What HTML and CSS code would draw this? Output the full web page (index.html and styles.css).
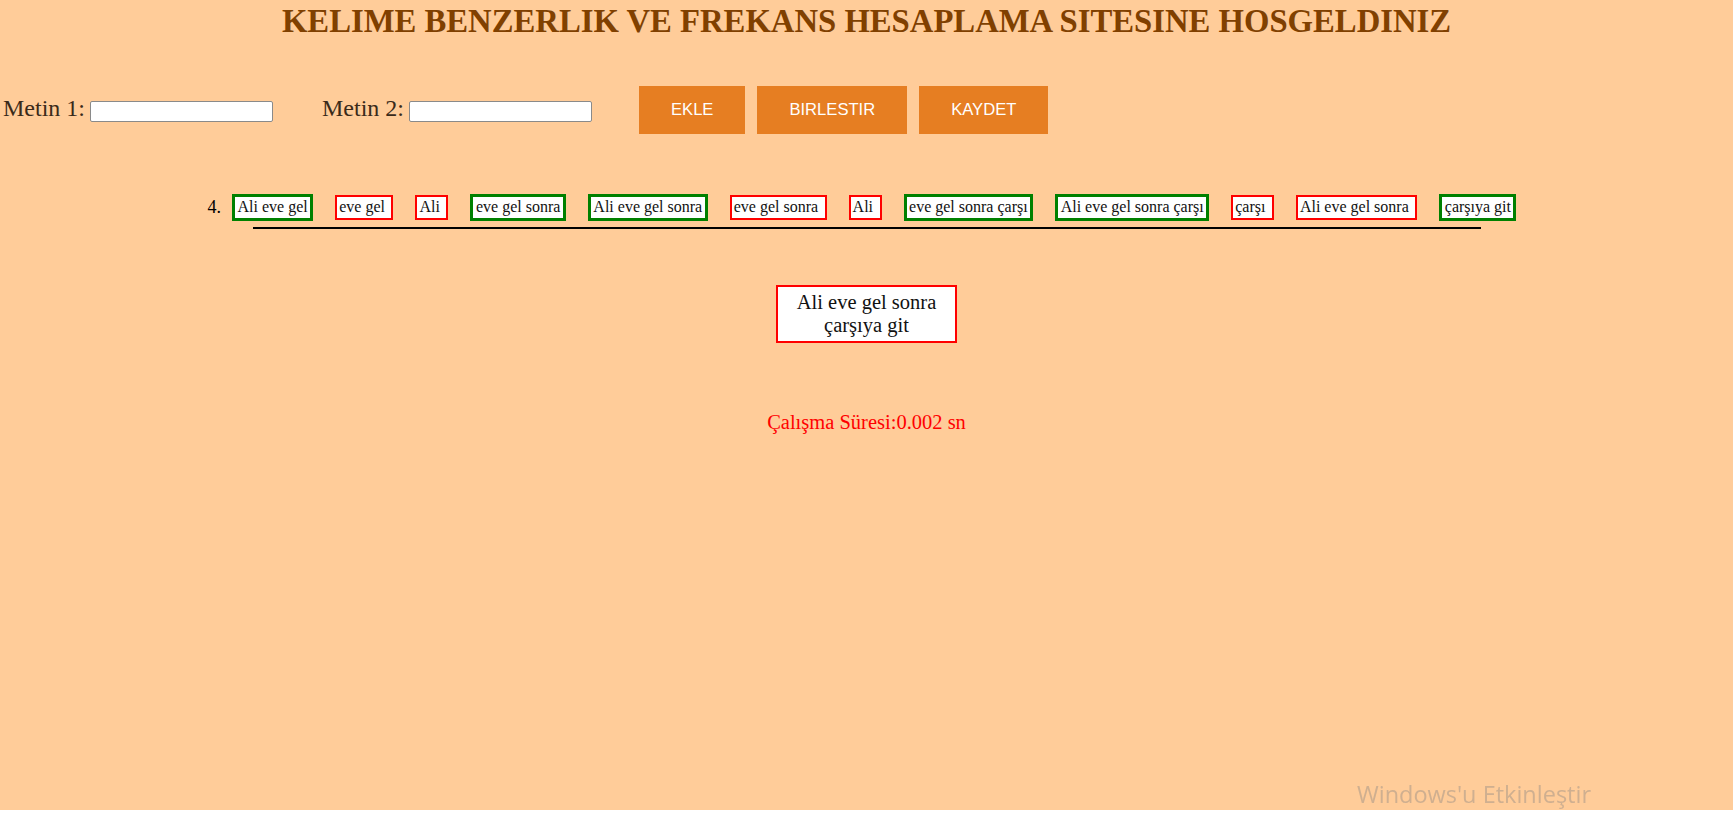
FILE: index.html
```html
<!DOCTYPE html>
<html lang="tr">
<head>
<meta charset="utf-8">
<title>Kelime Benzerlik</title>
<link rel="stylesheet" href="styles.css">
</head>
<body>
<div class="page">
  <h1 class="title">KELIME BENZERLIK VE FREKANS HESAPLAMA SITESINE HOSGELDINIZ</h1>

  <div class="controls">
    <label class="field">
      <span class="field-label">Metin 1:</span>
      <input class="field-input" type="text">
    </label>
    <label class="field field-second">
      <span class="field-label">Metin 2:</span>
      <input class="field-input" type="text">
    </label>
    <div class="buttons">
      <button class="btn" type="button">EKLE</button>
      <button class="btn" type="button">BIRLESTIR</button>
      <button class="btn" type="button">KAYDET</button>
    </div>
  </div>

  <div class="tags">
    <span class="tag-num">4.</span>
    <span class="tag tag-match">Ali eve gel</span>
    <span class="tag tag-miss">eve gel</span>
    <span class="tag tag-miss">Ali</span>
    <span class="tag tag-match">eve gel sonra</span>
    <span class="tag tag-match">Ali eve gel sonra</span>
    <span class="tag tag-miss">eve gel sonra</span>
    <span class="tag tag-miss">Ali</span>
    <span class="tag tag-match">eve gel sonra çarşı</span>
    <span class="tag tag-match">Ali eve gel sonra çarşı</span>
    <span class="tag tag-miss">çarşı</span>
    <span class="tag tag-miss">Ali eve gel sonra</span>
    <span class="tag tag-match">çarşıya git</span>
  </div>
  <div class="rule"></div>

  <div class="result">Ali eve gel sonra çarşıya git</div>

  <p class="timing">Çalışma Süresi:0.002 sn</p>
</div>
<div class="watermark">Windows'u Etkinleştir</div>
</body>
</html>
```

FILE: styles.css
```css
html {
  background: #ffffff;
}
body {
  margin: 0;
  font-family: "Liberation Serif", "Times New Roman", serif;
  color: #000;
}
.page {
  background: #ffcc99;
  height: 810px;
  overflow: hidden;
}
.title {
  margin: 0;
  padding-top: 3px;
  font-size: 32.7px;
  font-weight: bold;
  color: #804000;
  text-align: center;
}
.controls {
  display: flex;
  align-items: center;
  margin-top: 46px;
  padding-left: 3px;
}
.field {
  display: flex;
  align-items: baseline;
  padding-bottom: 4px;
}
.field-second {
  margin-left: 49px;
}
.field-label {
  font-size: 24px;
  color: #3a2a1a;
  margin-right: 5px;
}
.field-input {
  box-sizing: border-box;
  width: 183px;
  height: 21px;
  border: 1px solid #8a8a8a;
  border-radius: 2px;
  background: #fff;
  font-family: "Liberation Sans", Arial, sans-serif;
  font-size: 13px;
  padding: 1px 2px;
}
.buttons {
  display: flex;
  gap: 12px;
  margin-left: 47px;
}
.btn {
  background: #e67e22;
  color: #fff;
  border: none;
  padding: 15px 32px;
  font-family: "Liberation Sans", Arial, sans-serif;
  font-size: 16.6px;
  line-height: 18.4px;
  cursor: pointer;
}
.tags {
  display: flex;
  align-items: center;
  justify-content: center;
  gap: 22px;
  margin-top: 60px;
  padding-right: 9px;
}
.tag-num {
  font-size: 18px;
  margin-right: -11px;
}
.tag {
  background: #fff;
  font-size: 16px;
  line-height: 18.4px;
  padding: 1px 2.5px;
  color: #111;
}
.tag-match {
  border: 3px solid #008000;
}
.tag-miss {
  border: 2px solid #ff0000;
  padding: 1px 6.5px 1px 2px;
}
.rule {
  width: 1228px;
  margin: 6px auto 0;
  border-top: 2px solid #000;
}
.result {
  box-sizing: border-box;
  width: 181px;
  margin: 56px auto 0;
  padding: 4px 6px;
  border: 2px solid #ff0000;
  background: #fff;
  font-size: 20.5px;
  line-height: 23px;
  text-align: center;
  color: #111;
}
.timing {
  margin: 68px 0 0;
  text-align: center;
  color: #ff0000;
  font-size: 20.5px;
}
.watermark {
  position: fixed;
  left: 1357px;
  top: 778px;
  font-family: "Open Sans", "Noto Sans", sans-serif;
  font-size: 23.5px;
  color: rgba(128, 128, 128, 0.38);
  white-space: nowrap;
}
```
